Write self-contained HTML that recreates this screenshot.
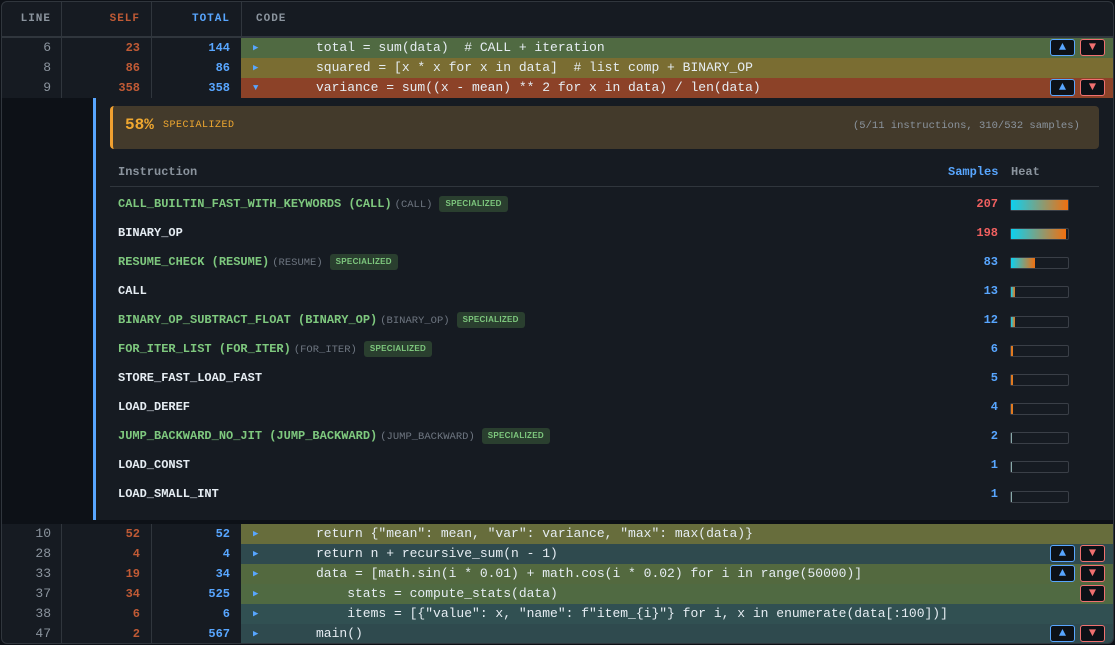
<!DOCTYPE html>
<html><head><style>
*{margin:0;padding:0;box-sizing:border-box}
body{width:1115px;height:645px;background:#0d1117;font-family:"Liberation Mono",monospace;overflow:hidden;position:relative}
.wrap{position:absolute;left:1px;top:1px;width:1113px;height:643px;background:#161b22;border:1px solid #30363d;border-radius:6px;overflow:hidden}
.a{position:absolute;white-space:pre}
.hd{position:absolute;top:0;height:35px;font-size:11px;font-weight:bold;letter-spacing:1px;line-height:35px}
.vl{position:absolute;width:1px;background:#30363d}
.r{position:absolute;height:20px;line-height:20px;font-size:13px;white-space:pre}
.ln{color:#8b949e;text-align:right;width:49px;left:0}
.sf{color:#c05a35;font-weight:bold;text-align:right;width:79px;left:59px;font-size:12px}
.tt{color:#58a6ff;font-weight:bold;text-align:right;width:79px;left:149px;font-size:12px}
.cd{left:239px;width:874px;color:#e6edf3}
.cd .ar{position:absolute;left:12px;font-size:9px;color:#58a6ff}
.cd .tx{position:absolute;left:75px;white-space:pre}
.bu,.bd{position:absolute;top:1px;width:25px;height:17px;border-radius:3px;background:#0d1117;font-size:12px;line-height:15px;text-align:center}
.bu{left:809px;border:1px solid #58a6ff;color:#58a6ff}
.bd{left:839px;border:1px solid #f07070;color:#f07070}
.ir{position:absolute;left:116px;font-size:12px;font-weight:bold;height:20px;line-height:20px;white-space:pre}
.g{color:#7ec87e}.w{color:#e6edf3}
.sm{color:#6e7681;font-weight:normal;font-size:10.5px;margin-left:3px}
.bg{display:inline-block;background:#2a3f2f;color:#7ec87e;font-size:8px;font-weight:bold;padding:0 6px;height:16px;line-height:16px;border-radius:3px;vertical-align:middle;margin-left:7px;font-family:"Liberation Sans",sans-serif;letter-spacing:.3px}
.sv{position:absolute;width:60px;left:936px;text-align:right;font-size:12px;font-weight:bold}
.hb{position:absolute;left:1008px;width:59px;height:12px;border:1px solid #3a3f47;border-radius:2px;background:#161b22}
.hb i{display:block;height:10px;background:linear-gradient(90deg,#0dd0f0,#f07010)}
</style></head><body><div class="wrap">
<div class="hd" style="left:0;width:49px;text-align:right;color:#8b949e">LINE</div>
<div class="hd" style="left:59px;width:79px;text-align:right;color:#c05a35">SELF</div>
<div class="hd" style="left:149px;width:79px;text-align:right;color:#58a6ff">TOTAL</div>
<div class="hd" style="left:254px;color:#8b949e">CODE</div>
<div class="a" style="left:0;top:34px;width:1113px;height:2px;background:#30363d"></div>
<div class="vl" style="left:59px;top:0;height:35px"></div>
<div class="vl" style="left:149px;top:0;height:35px"></div>
<div class="vl" style="left:239px;top:0;height:35px"></div>
<div class="vl" style="left:59px;top:36px;height:60px"></div>
<div class="vl" style="left:149px;top:36px;height:60px"></div>

<div class="r ln" style="top:36px">6</div><div class="r sf" style="top:36px">23</div><div class="r tt" style="top:36px">144</div>
<div class="r cd" style="top:36px;background:#506a42"><span class="ar">▶</span><span class="tx">total = sum(data)  # CALL + iteration</span><span class="bu">▲</span><span class="bd">▼</span></div>
<div class="r ln" style="top:56px">8</div><div class="r sf" style="top:56px">86</div><div class="r tt" style="top:56px">86</div>
<div class="r cd" style="top:56px;background:#7a6d32"><span class="ar">▶</span><span class="tx">squared = [x * x for x in data]  # list comp + BINARY_OP</span></div>
<div class="r ln" style="top:76px">9</div><div class="r sf" style="top:76px">358</div><div class="r tt" style="top:76px">358</div>
<div class="r cd" style="top:76px;background:#8c4228"><span class="ar">▼</span><span class="tx">variance = sum((x - mean) ** 2 for x in data) / len(data)</span><span class="bu">▲</span><span class="bd">▼</span></div>

<div class="a" style="left:0;top:96px;width:91px;height:422px;background:#0d1117"></div>
<div class="a" style="left:91px;top:96px;width:3px;height:422px;background:#58a6ff"></div>
<div class="a" style="left:94px;top:96px;width:1019px;height:422px;background:#161b22"></div>
<div class="a" style="left:108px;top:104px;width:989px;height:43px;background:#433a2b;border-left:3px solid #f0a030;border-radius:4px"></div>
<div class="a" style="left:123px;top:114px;font-size:16px;font-weight:bold;color:#f0a830">58%</div>
<div class="a" style="left:161px;top:118px;font-size:10px;letter-spacing:.5px;color:#f0a830">SPECIALIZED</div>
<div class="a" style="left:851px;top:118px;font-size:10.5px;color:#8b949e">(5/11 instructions, 310/532 samples)</div>
<div class="a" style="left:116px;top:163px;font-size:12px;font-weight:bold;color:#8b949e">Instruction</div>
<div class="a" style="left:946px;top:163px;font-size:12px;font-weight:bold;color:#58a6ff">Samples</div>
<div class="a" style="left:1009px;top:163px;font-size:12px;font-weight:bold;color:#8b949e">Heat</div>
<div class="a" style="left:108px;top:184px;width:989px;height:1px;background:#30363d"></div>

<div class="ir g" style="top:192px">CALL_BUILTIN_FAST_WITH_KEYWORDS (CALL)<span class="sm">(CALL)</span><span class="bg">SPECIALIZED</span></div>
<div class="sv" style="top:195px;color:#f06060">207</div><div class="hb" style="top:197px"><i style="width:57px"></i></div>
<div class="ir w" style="top:221px">BINARY_OP</div>
<div class="sv" style="top:224px;color:#f06060">198</div><div class="hb" style="top:226px"><i style="width:55px"></i></div>
<div class="ir g" style="top:250px">RESUME_CHECK (RESUME)<span class="sm">(RESUME)</span><span class="bg">SPECIALIZED</span></div>
<div class="sv" style="top:253px;color:#58a6ff">83</div><div class="hb" style="top:255px"><i style="width:24px"></i></div>
<div class="ir w" style="top:279px">CALL</div>
<div class="sv" style="top:282px;color:#58a6ff">13</div><div class="hb" style="top:284px"><i style="width:4px"></i></div>
<div class="ir g" style="top:308px">BINARY_OP_SUBTRACT_FLOAT (BINARY_OP)<span class="sm">(BINARY_OP)</span><span class="bg">SPECIALIZED</span></div>
<div class="sv" style="top:311px;color:#58a6ff">12</div><div class="hb" style="top:314px"><i style="width:4px"></i></div>
<div class="ir g" style="top:337px">FOR_ITER_LIST (FOR_ITER)<span class="sm">(FOR_ITER)</span><span class="bg">SPECIALIZED</span></div>
<div class="sv" style="top:340px;color:#58a6ff">6</div><div class="hb" style="top:343px"><i style="width:2px;background:#e07a20"></i></div>
<div class="ir w" style="top:366px">STORE_FAST_LOAD_FAST</div>
<div class="sv" style="top:369px;color:#58a6ff">5</div><div class="hb" style="top:372px"><i style="width:2px;background:#e07a20"></i></div>
<div class="ir w" style="top:395px">LOAD_DEREF</div>
<div class="sv" style="top:398px;color:#58a6ff">4</div><div class="hb" style="top:401px"><i style="width:2px;background:#e07a20"></i></div>
<div class="ir g" style="top:424px">JUMP_BACKWARD_NO_JIT (JUMP_BACKWARD)<span class="sm">(JUMP_BACKWARD)</span><span class="bg">SPECIALIZED</span></div>
<div class="sv" style="top:427px;color:#58a6ff">2</div><div class="hb" style="top:430px"><i style="width:1px;background:#8aa"></i></div>
<div class="ir w" style="top:453px">LOAD_CONST</div>
<div class="sv" style="top:456px;color:#58a6ff">1</div><div class="hb" style="top:459px"><i style="width:1px;background:#8aa"></i></div>
<div class="ir w" style="top:482px">LOAD_SMALL_INT</div>
<div class="sv" style="top:485px;color:#58a6ff">1</div><div class="hb" style="top:489px"><i style="width:1px;background:#8aa"></i></div>

<div class="a" style="left:0;top:518px;width:1113px;height:4px;background:#0d1117"></div>
<div class="vl" style="left:59px;top:522px;height:121px"></div>
<div class="vl" style="left:149px;top:522px;height:121px"></div>

<div class="r ln" style="top:522px">10</div><div class="r sf" style="top:522px">52</div><div class="r tt" style="top:522px">52</div>
<div class="r cd" style="top:522px;background:#676d3c"><span class="ar">▶</span><span class="tx">return {"mean": mean, "var": variance, "max": max(data)}</span></div>
<div class="r ln" style="top:542px">28</div><div class="r sf" style="top:542px">4</div><div class="r tt" style="top:542px">4</div>
<div class="r cd" style="top:542px;background:#2f4a4e"><span class="ar">▶</span><span class="tx">return n + recursive_sum(n - 1)</span><span class="bu">▲</span><span class="bd">▼</span></div>
<div class="r ln" style="top:562px">33</div><div class="r sf" style="top:562px">19</div><div class="r tt" style="top:562px">34</div>
<div class="r cd" style="top:562px;background:#53693f"><span class="ar">▶</span><span class="tx">data = [math.sin(i * 0.01) + math.cos(i * 0.02) for i in range(50000)]</span><span class="bu">▲</span><span class="bd">▼</span></div>
<div class="r ln" style="top:582px">37</div><div class="r sf" style="top:582px">34</div><div class="r tt" style="top:582px">525</div>
<div class="r cd" style="top:582px;background:#506a42"><span class="ar">▶</span><span class="tx">    stats = compute_stats(data)</span><span class="bd">▼</span></div>
<div class="r ln" style="top:602px">38</div><div class="r sf" style="top:602px">6</div><div class="r tt" style="top:602px">6</div>
<div class="r cd" style="top:602px;background:#315052"><span class="ar">▶</span><span class="tx">    items = [{"value": x, "name": f"item_{i}"} for i, x in enumerate(data[:100])]</span></div>
<div class="r ln" style="top:622px">47</div><div class="r sf" style="top:622px">2</div><div class="r tt" style="top:622px">567</div>
<div class="r cd" style="top:622px;background:#2f4a4e"><span class="ar">▶</span><span class="tx">main()</span><span class="bu">▲</span><span class="bd">▼</span></div>
</div></body></html>
